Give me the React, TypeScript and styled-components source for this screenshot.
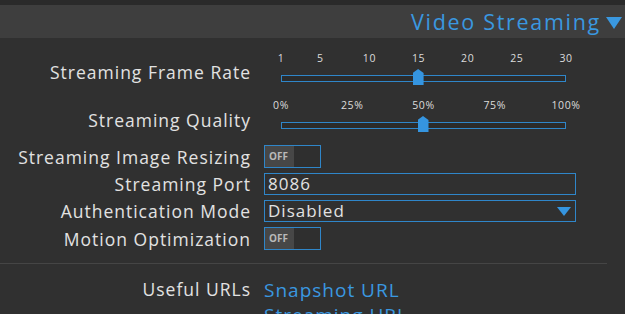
import React from "react";
import styled, { createGlobalStyle } from "styled-components";

const Global = createGlobalStyle`
  body {
    margin: 0;
    background: #303030;
    font-family: "Open Sans", "DejaVu Sans", sans-serif;
    color: #e2e2e2;
  }
`;

const Page = styled.div`
  width: 625px;
  height: 314px;
  overflow: hidden;
  border-top: 5px solid #2a2a2a;
  box-sizing: border-box;
`;

const Header = styled.header`
  height: 33px;
  background: #3e3e3e;
  display: flex;
  align-items: center;
  justify-content: flex-end;
  padding-right: 3px;
  gap: 5px;
  color: #3a98e0;
  font-size: 21.5px;
  letter-spacing: 1.7px;
`;

const Arrow = styled.span`
  width: 0;
  height: 0;
  border-left: 8px solid transparent;
  border-right: 8px solid transparent;
  border-top: 12px solid #3a98e0;
  margin-top: 2px;
`;

const Form = styled.div`
  display: grid;
  grid-template-columns: 251px 312px;
  column-gap: 13px;
  padding-top: 13px;
`;

interface IRow {
  top?: number;
}

const Label = styled.div<IRow>`
  text-align: right;
  font-size: 17.5px;
  line-height: 22px;
  letter-spacing: 1px;
  white-space: nowrap;
  margin-top: ${({ top }) => (top ? top : 0)}px;
  align-self: end;
`;

const Cell = styled.div<IRow>`
  margin-top: ${({ top }) => (top ? top : 0)}px;
  align-self: end;
`;

const SliderBox = styled.div`
  position: relative;
  height: 33px;
  padding: 0 10px 0 17px;
`;

const Ticks = styled.div`
  position: relative;
  height: 14px;
`;

const Tick = styled.span`
  position: absolute;
  top: 0;
  transform: translateX(-50%);
  font-size: 10.5px;
  line-height: 14px;
  letter-spacing: 0.6px;
  color: #dcdcdc;
`;

const Track = styled.div`
  position: relative;
  margin-top: 10px;
  height: 5px;
  border: 1px solid #2f86c9;
  background: #2b2b2b;
`;

const Thumb = styled.div`
  position: absolute;
  top: -7px;
  width: 11px;
  height: 16px;
  margin-left: -6px;
  background: #3595e0;
  clip-path: polygon(50% 0, 100% 25%, 100% 100%, 0 100%, 0 25%);
`;

const Switch = styled.div`
  width: 55px;
  height: 21px;
  border: 1px solid #2f86c9;
  background: #2f2f2f;
  display: flex;
`;

const SwitchOff = styled.span`
  width: 29px;
  background: #474747;
  color: #b9b9b9;
  font-size: 10px;
  font-weight: bold;
  line-height: 20px;
  padding-left: 4px;
  box-sizing: border-box;
`;

const Input = styled.div`
  height: 20px;
  border: 1px solid #2f86c9;
  font-size: 17px;
  line-height: 20px;
  letter-spacing: 1px;
  padding-left: 3px;
  display: flex;
  align-items: center;
  justify-content: space-between;
`;

const SelectArrow = styled.span`
  width: 0;
  height: 0;
  border-left: 7px solid transparent;
  border-right: 7px solid transparent;
  border-top: 9px solid #3595e0;
  margin-right: 4px;
`;

const Separator = styled.hr`
  border: 0;
  border-top: 1px solid #454545;
  width: 607px;
  margin: 13px 0 0 0;
`;

const Links = styled.div`
  display: flex;
  flex-direction: column;
  margin-top: 1px;
`;

const Link = styled.a`
  color: #3a98e0;
  font-size: 19px;
  line-height: 25px;
  letter-spacing: 1px;
  text-decoration: none;
`;

const Slider = ({ labels, value, min, max }: { labels: { text: string; pos: number }[]; value: number; min: number; max: number }) => (
  <SliderBox>
    <Ticks>
      {labels.map((l) => (
        <Tick key={l.text} style={{ left: `${((l.pos - min) / (max - min)) * 100}%` }}>
          {l.text}
        </Tick>
      ))}
    </Ticks>
    <Track>
      <Thumb style={{ left: `${((value - min) / (max - min)) * 100}%` }} />
    </Track>
  </SliderBox>
);

const frames = [1, 5, 10, 15, 20, 25, 30].map((n) => ({ text: String(n), pos: n }));
const quality = [0, 25, 50, 75, 100].map((n) => ({ text: `${n}%`, pos: n }));

const App: React.FC = () => {
  return (
    <Page>
      <Global />
      <Header>
        Video Streaming
        <Arrow />
      </Header>
      <Form>
        <Label style={{ marginBottom: 1 }}>Streaming Frame Rate</Label>
        <Cell>
          <Slider labels={frames} value={15} min={1} max={30} />
        </Cell>

        <Label top={14}>Streaming Quality</Label>
        <Cell top={14}>
          <Slider labels={quality} value={50} min={0} max={100} />
        </Cell>

        <Label top={14}>Streaming Image Resizing</Label>
        <Cell top={14}>
          <Switch>
            <SwitchOff>OFF</SwitchOff>
          </Switch>
        </Cell>

        <Label top={5}>Streaming Port</Label>
        <Cell top={5}>
          <Input>8086</Input>
        </Cell>

        <Label top={5}>Authentication Mode</Label>
        <Cell top={5}>
          <Input>
            Disabled
            <SelectArrow />
          </Input>
        </Cell>

        <Label top={5}>Motion Optimization</Label>
        <Cell top={5}>
          <Switch>
            <SwitchOff>OFF</SwitchOff>
          </Switch>
        </Cell>
      </Form>
      <Separator />
      <Form style={{ paddingTop: 13 }}>
        <Label style={{ alignSelf: "start", lineHeight: "24px" }}>Useful URLs</Label>
        <Links>
          <Link href="#">Snapshot URL</Link>
          <Link href="#">Streaming URL</Link>
        </Links>
      </Form>
    </Page>
  );
};

export default App;
